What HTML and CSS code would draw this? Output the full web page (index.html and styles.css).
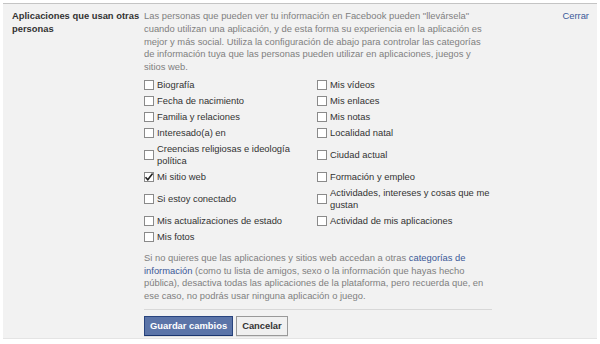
FILE: index.html
```html
<!DOCTYPE html>
<html lang="es">
<head>
  <meta charset="UTF-8">
  <title>Aplicaciones que usan otras personas</title>
  <link rel="stylesheet" href="styles.css">
</head>
<body>
  <div class="panel">
    <div class="section-label">Aplicaciones que usan otras personas</div>

    <div class="content">
      <p class="desc">Las personas que pueden ver tu información en Facebook pueden "llevársela" cuando utilizan una aplicación, y de esta forma su experiencia en la aplicación es mejor y más social. Utiliza la configuración de abajo para controlar las categorías de información tuya que las personas pueden utilizar en aplicaciones, juegos y sitios web.</p>

      <div class="options">
        <label class="option"><span class="box"></span><span>Biografía</span></label>
        <label class="option"><span class="box"></span><span>Mis vídeos</span></label>

        <label class="option"><span class="box"></span><span>Fecha de nacimiento</span></label>
        <label class="option"><span class="box"></span><span>Mis enlaces</span></label>

        <label class="option"><span class="box"></span><span>Familia y relaciones</span></label>
        <label class="option"><span class="box"></span><span>Mis notas</span></label>

        <label class="option"><span class="box"></span><span>Interesado(a) en</span></label>
        <label class="option"><span class="box"></span><span>Localidad natal</span></label>

        <label class="option"><span class="box"></span><span>Creencias religiosas e ideología política</span></label>
        <label class="option"><span class="box"></span><span>Ciudad actual</span></label>

        <label class="option"><span class="box checked"><svg width="10" height="10" viewBox="0 0 10 10"><path d="M1.5 5.2 L3.8 7.8 L8.6 1.6" fill="none" stroke="#222" stroke-width="1.6"/></svg></span><span>Mi sitio web</span></label>
        <label class="option"><span class="box"></span><span>Formación y empleo</span></label>

        <label class="option"><span class="box"></span><span>Si estoy conectado</span></label>
        <label class="option"><span class="box"></span><span>Actividades, intereses y cosas que me gustan</span></label>

        <label class="option"><span class="box"></span><span>Mis actualizaciones de estado</span></label>
        <label class="option"><span class="box"></span><span>Actividad de mis aplicaciones</span></label>

        <label class="option"><span class="box"></span><span>Mis fotos</span></label>
      </div>

      <p class="note">Si no quieres que las aplicaciones y sitios web accedan a otras <a href="#">categorías de información</a> (como tu lista de amigos, sexo o la información que hayas hecho pública), desactiva todas las aplicaciones de la plataforma, pero recuerda que, en ese caso, no podrás usar ninguna aplicación o juego.</p>

      <div class="actions">
        <button class="btn btn-primary">Guardar cambios</button>
        <button class="btn">Cancelar</button>
      </div>
    </div>

    <a class="close" href="#">Cerrar</a>
  </div>
</body>
</html>
```

FILE: styles.css
```css
* {
  margin: 0;
  padding: 0;
  box-sizing: border-box;
}

body {
  font-family: "Liberation Sans", Arial, sans-serif;
  font-size: 9.4px;
  color: #333;
  background-color: #fff;
  padding: 3px;
}

a {
  color: #3b5998;
  text-decoration: none;
}

.panel {
  display: flex;
  align-items: flex-start;
  height: 336px;
  background-color: #f2f2f2;
  border-top: 1px solid #c4c4c4;
  border-bottom: 1px solid #e4e4e4;
  padding: 6px 8px 5px 9px;
}

.section-label {
  width: 130px;
  font-weight: bold;
  line-height: 12.75px;
  color: #333;
}

.content {
  width: 348px;
  margin-left: 2px;
}

.desc,
.note {
  color: #808080;
  line-height: 12.75px;
}

.options {
  display: grid;
  grid-template-columns: 173px 175px;
  margin-top: 3px;
}

.option {
  display: flex;
  align-items: center;
  padding: 2px 0;
  line-height: 12px;
  color: #333;
}

.box {
  flex: none;
  width: 10px;
  height: 10px;
  margin-right: 3px;
  border: 1px solid #8a8a8a;
  background-color: #fff;
  position: relative;
}

.box svg {
  position: absolute;
  left: -1px;
  top: -1px;
}

.note {
  margin-top: 7px;
  padding-bottom: 6px;
  border-bottom: 1px solid #d8d8d8;
}

.actions {
  display: flex;
  gap: 3px;
  margin-top: 6px;
}

.btn {
  font-family: "Liberation Sans", Arial, sans-serif;
  font-size: 9.4px;
  font-weight: bold;
  line-height: 14px;
  padding: 2px 5px;
  border: 1px solid #999;
  background-color: #f0f0f0;
  color: #333;
  box-shadow: 0 1px 0 rgba(0, 0, 0, 0.08);
  cursor: pointer;
}

.btn-primary {
  background-color: #5b74a8;
  border-color: #29447e #29447e #1a356e;
  color: #fff;
}

.close {
  margin-left: auto;
  line-height: 12.75px;
}
```
